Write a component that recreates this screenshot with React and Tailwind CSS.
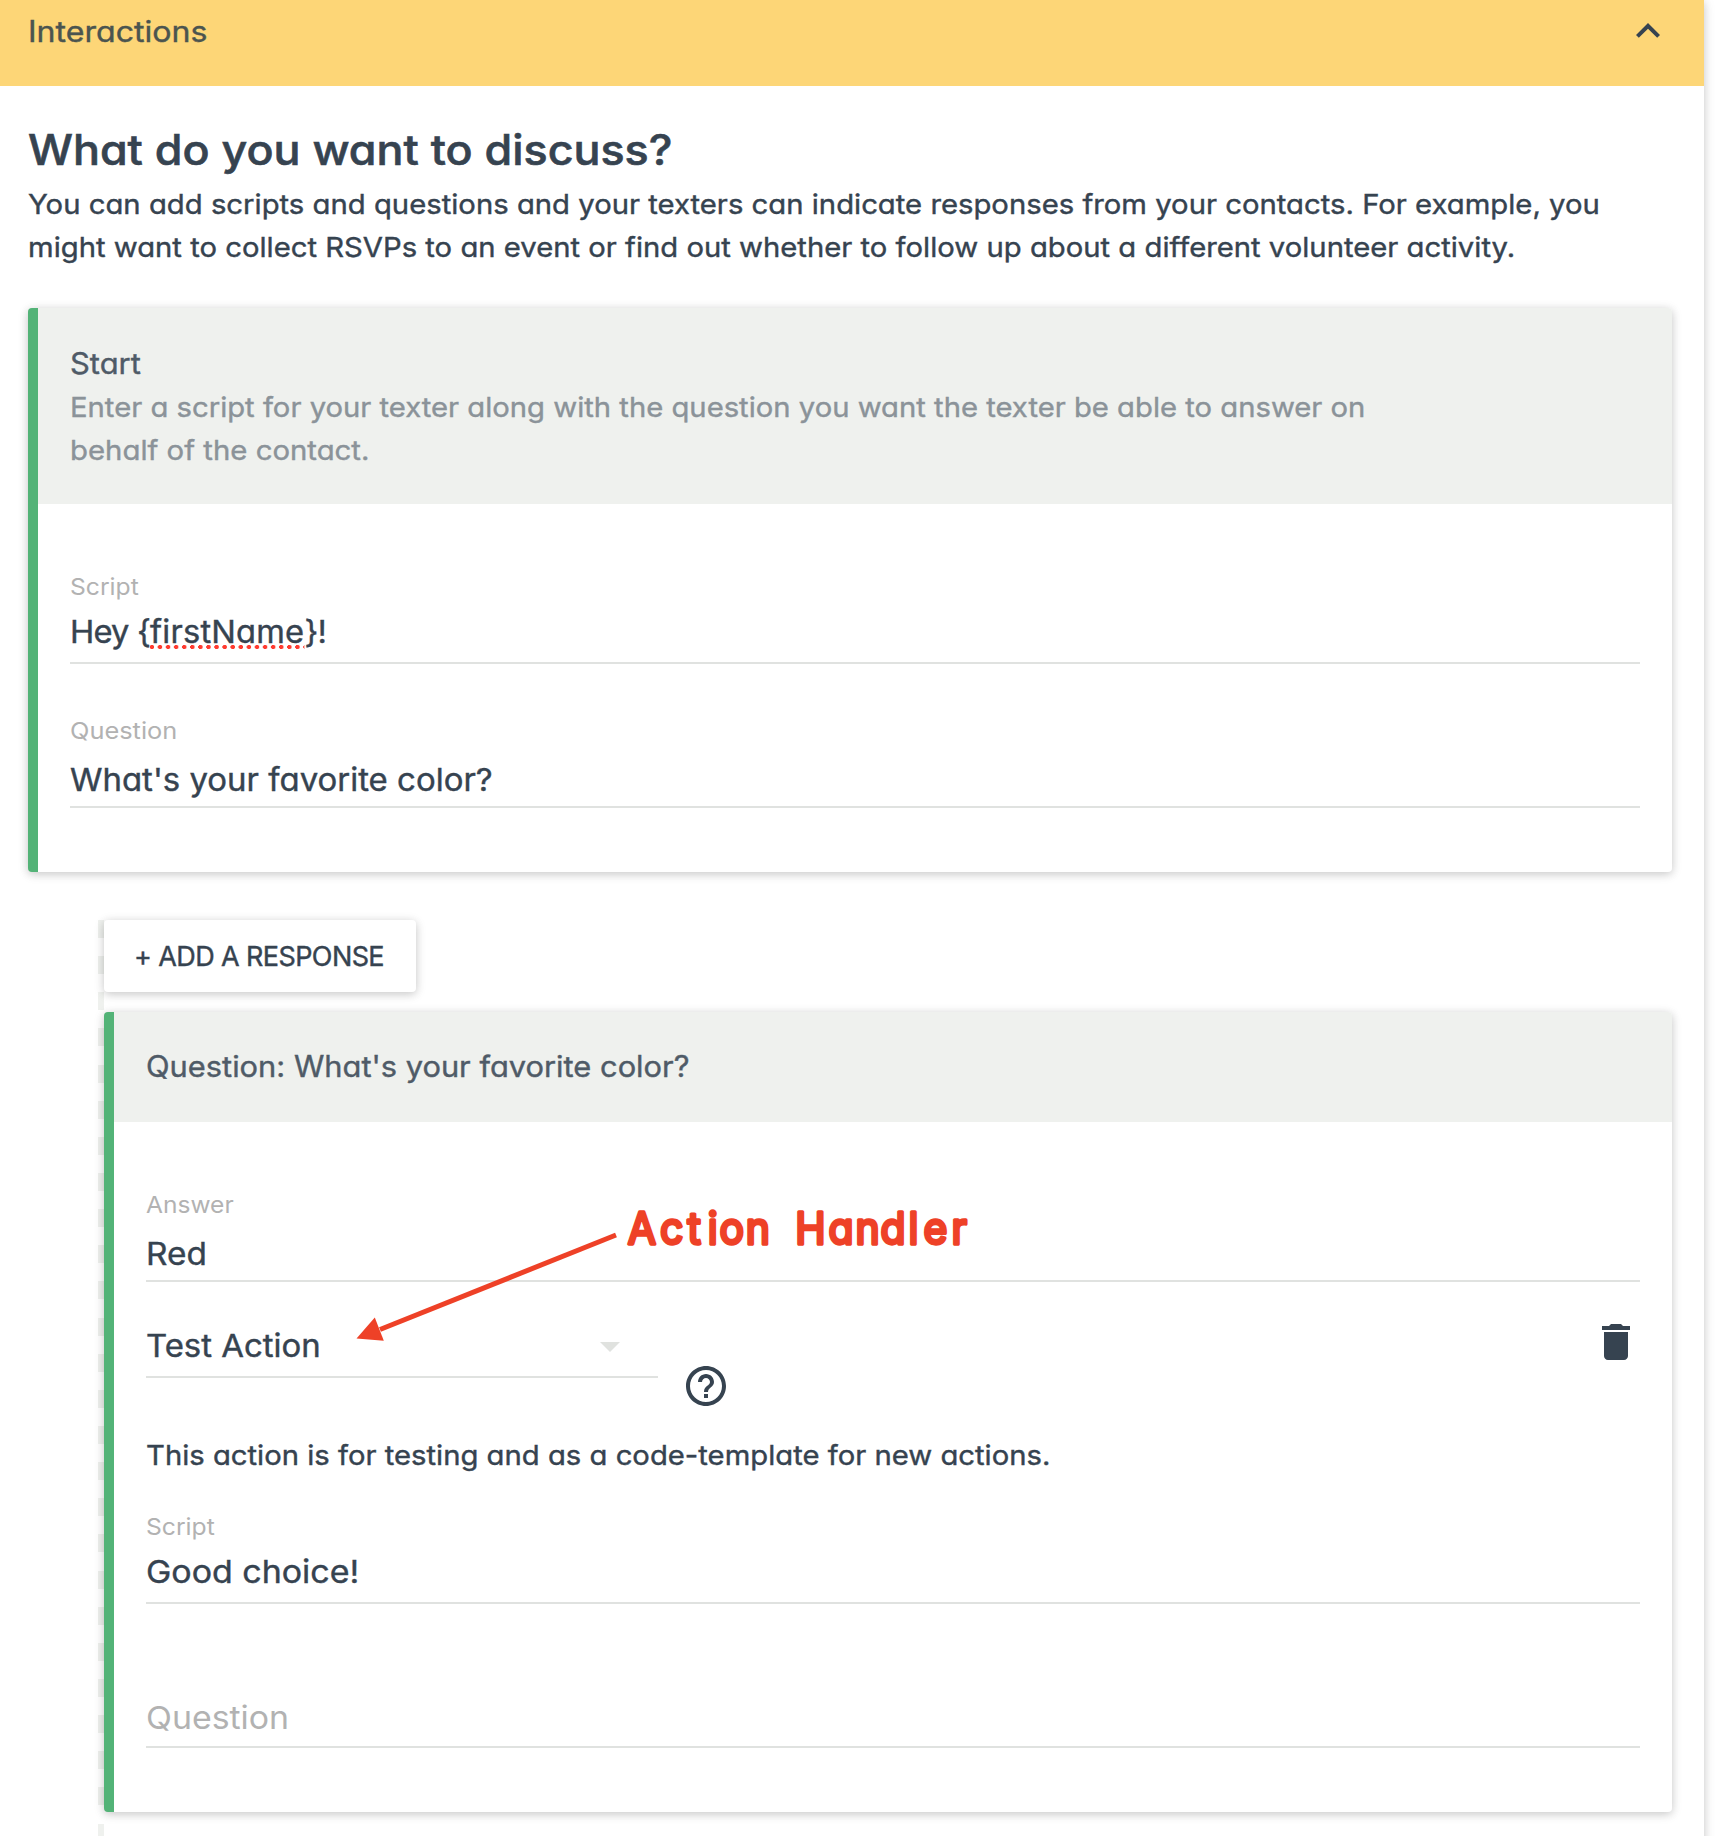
import { MdKeyboardArrowUp, MdHelpOutline, MdDelete } from "react-icons/md";

const SHADOW = "shadow-[0_2px_12px_rgba(0,0,0,0.12),0_2px_8px_rgba(0,0,0,0.12)]";
const VALUE = "origin-left h-[46px] text-[31.5px] leading-[46px] whitespace-nowrap";

function Card({ title, stretch, description, header, children }) {
  return (
    <section className={`relative rounded-[4px] border-l-[10px] border-[#53b377] bg-white ${SHADOW}`}>
      <header className={`rounded-tr-[4px] bg-[#eff1ee] px-8 ${header}`}>
        <h3 className={`h-11 origin-left text-[29.6px] leading-[44px] text-[#4f5b67] ${stretch}`}>{title}</h3>
        {description}
      </header>
      <div className="px-8 pt-[67.5px] pb-16">{children}</div>
    </section>
  );
}

function Field({ label, stretch, multiline, children }) {
  return (
    <div className={`border-b-2 border-[#e0e2e0] ${multiline ? "pb-[7.5px]" : "pb-[3.5px]"}`}>
      <div
        className={`h-[30px] w-fit origin-left text-[23.5px] leading-[30px] text-[#b2b2b2] [-webkit-text-stroke-width:0px] ${stretch} ${
          multiline ? "mb-[7px]" : "mb-[11px]"
        }`}
      >
        {label}
      </div>
      {children}
    </div>
  );
}

function Annotation() {
  return (
    <svg
      className="pointer-events-none absolute top-[178px] left-[236px] h-[160px] w-[640px]"
      viewBox="350 1190 640 160"
      fill="#ee4127"
    >
      <path d="M616 1235L380 1329.5" stroke="#ee4127" strokeWidth="5" />
      <path d="M356.5 1338.5L374.8 1317.5L383.8 1340.8z" />
      <g transform="scale(0.93 1)" stroke="#ee4127" strokeWidth="3.4" strokeLinejoin="round" fontSize="44">
        <text
          className="[-webkit-text-stroke-width:0px]"
          y="1244.5"
          x="675 709.8 739.2 761 773.7 802"
        >
          Action
        </text>
        <text
          className="[-webkit-text-stroke-width:0px]"
          y="1244.5"
          x="855 890.8 920 946.7 977 993 1023"
        >
          Handler
        </text>
      </g>
    </svg>
  );
}

export default function App() {
  return (
    <div className="h-[1836px] overflow-hidden bg-white font-['Inter',sans-serif] text-[#364350] [-webkit-text-stroke-width:0.4px] [font-feature-settings:'cv11']">
      <main className={`h-[1860px] w-[1704px] bg-white ${SHADOW}`}>
        <div className="flex h-[86px] items-start justify-between bg-[#fdd677] pt-[7px] pr-8 pl-7">
          <h1 className="mt-0.5 origin-left scale-x-[1.085] text-[29.6px] leading-[44px] text-[#4b544f]">Interactions</h1>
          <MdKeyboardArrowUp className="size-12" />
        </div>

        <div className="px-7 pt-9 pr-8">
          <h2 className="h-14 w-fit origin-left scale-x-[1.067] text-[42px] leading-[56px] font-medium [-webkit-text-stroke-width:0.6px]">
            What do you want to discuss?
          </h2>
          <p className="mt-[4.5px] mb-[39.5px] whitespace-nowrap text-[27.5px] leading-[43px]">
            <span className="block w-fit origin-left scale-x-[1.0645]">
              You can add scripts and questions and your texters can indicate responses from your contacts. For example, you
            </span>
            <span className="block w-fit origin-left scale-x-[1.0638]">
              might want to collect RSVPs to an event or find out whether to follow up about a different volunteer activity.
            </span>
          </p>

          <Card
            title="Start"
            stretch="w-fit scale-x-[1.045]"
            header="h-[196px] pt-[33px]"
            description={
              <p className="mt-[0.6px] text-[27.5px] leading-[43px] whitespace-nowrap text-[#8b9399]">
                <span className="block w-fit origin-left scale-x-[1.0632]">
                  Enter a script for your texter along with the question you want the texter be able to answer on
                </span>
                <span className="block w-fit origin-left scale-x-[1.067]">behalf of the contact.</span>
              </p>
            }
          >
            <Field label="Script" stretch="scale-x-[1.05]" multiline>
              <div className={`${VALUE} w-fit scale-x-[1.037]`}>
                <span className="tracking-[-0.8px]">{"Hey {"}</span>
                <span className="inline-block h-[41px] bg-[radial-gradient(circle_at_4px_2px,#ff3b30_1.9px,transparent_2.4px)] bg-[length:7.8px_4px] bg-[position:-2px_36px] bg-repeat-x align-top tracking-[0.2px]">
                  firstName
                </span>
                <span className="tracking-[-0.8px]">{"}!"}</span>
              </div>
            </Field>
            <div className="h-[51.5px]" />
            <Field label="Question" stretch="scale-x-[1.08]">
              <div className={`${VALUE} w-fit scale-x-[1.046]`}>What's your favorite color?</div>
            </Field>
          </Card>

          <div className="mt-12 ml-[70px] flex">
            <div className="w-1.5 shrink-0 bg-[repeating-linear-gradient(to_bottom,#eff1ee_0px,#eff1ee_18px,transparent_18px,transparent_36.14px)]" />
            <div className="grow pb-12">
              <button
                className={`mb-5 block h-[72px] w-[312px] rounded-[4px] bg-white pt-[2px] pr-[2px] text-[27px] tracking-[-0.6px] whitespace-nowrap ${SHADOW}`}
              >
                + ADD A RESPONSE
              </button>

              <Card
                title="Question: What's your favorite color?"
                stretch="w-fit scale-x-[1.042]"
                header="h-[110px] pt-8"
              >
                <Field label="Answer" stretch="scale-x-[1.045]">
                  <div className={`${VALUE} w-fit scale-x-[1.06]`}>Red</div>
                </Field>

                <div className="mt-9 flex items-start">
                  <div className="mt-[4.5px] flex w-[512px] items-start justify-between border-b-2 border-[#e0e2e0] pr-[38px] pb-[7.5px]">
                    <div className={`${VALUE} scale-x-[1.045]`}>Test Action</div>
                    <svg className="mt-[19.5px] h-[10px] w-5" viewBox="0 0 20 10" fill="#e0e2df">
                      <path d="M0 0h20L10 10z" />
                    </svg>
                  </div>
                  <MdHelpOutline className="mt-11 ml-6 size-12" />
                  <MdDelete className="ml-auto size-12" />
                </div>

                <p className="mt-[23.5px] mb-[35px] w-fit origin-left scale-x-[1.0636] text-[27.5px] leading-[43px]">
                  This action is for testing and as a code-template for new actions.
                </p>

                <Field label="Script" stretch="scale-x-[1.05]" multiline>
                  <div className={`${VALUE} w-fit scale-x-[1.077]`}>Good choice!</div>
                </Field>

                <div className="mt-[90.5px] border-b-2 border-[#e0e2e0] pb-[5.5px]">
                  <div className={`${VALUE} w-fit scale-x-[1.075] text-[#b2b2b2] [-webkit-text-stroke-width:0px]`}>
                    Question
                  </div>
                </div>
                <Annotation />
              </Card>
            </div>
          </div>
        </div>
      </main>
    </div>
  );
}
